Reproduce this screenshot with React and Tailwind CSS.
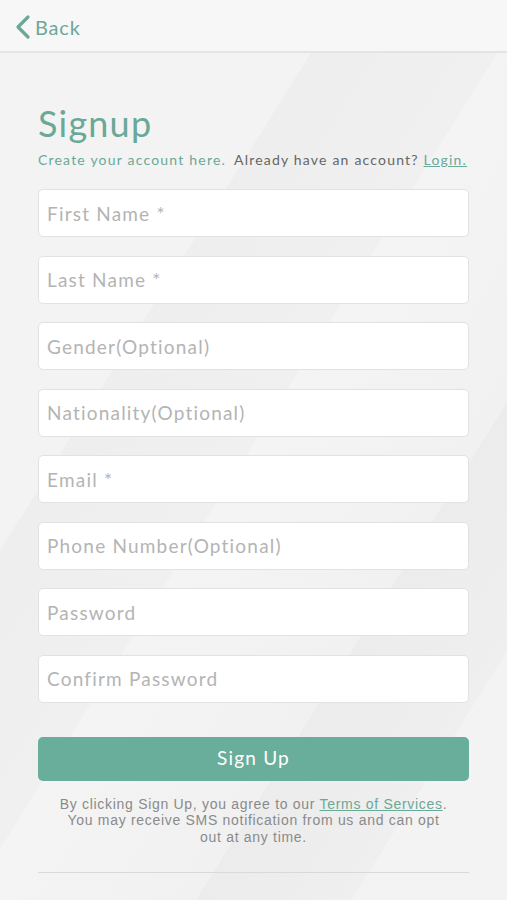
import React from "react";

const fields = [
  "First Name *",
  "Last Name *",
  "Gender(Optional)",
  "Nationality(Optional)",
  "Email *",
  "Phone Number(Optional)",
  "Password",
  "Confirm Password",
];

function BackIcon() {
  return (
    <svg width="18" height="26" viewBox="0 0 18 26" fill="none">
      <path d="M14 3 L4 13 L14 23" stroke="#6aa898" strokeWidth="3.2" strokeLinecap="round" strokeLinejoin="round" />
    </svg>
  );
}

export default function App() {
  return (
    <div className="w-[507px] h-[900px] overflow-hidden flex flex-col bg-[#f1f1f1]" style={{ fontFamily: "Lato, 'Noto Sans', sans-serif" }}>
      {/* header */}
      <div className="h-[53px] shrink-0 bg-[#f7f7f7] border-b-2 border-[#e4e4e4] flex items-center pl-[14px] pt-[3px]">
        <BackIcon />
        <span className="ml-[3px] text-[20px] text-[#6ea797] leading-none tracking-[0.8px]">Back</span>
      </div>

      {/* body */}
      <div className="flex-1 px-[38px] pt-[52px] bg-[linear-gradient(122deg,#f3f3f3_0%,#f3f3f3_30%,#eeeeee_30%,#f0f0f0_48%,#f4f4f4_48%,#f1f1f1_70%,#ececec_70%,#efefef_85%,#f3f3f3_85%)]">
        <h1 className="text-[36px] text-[#6aa898] leading-none tracking-[1.2px]">Signup</h1>
        <p className="mt-[12px] text-[14px] leading-none tracking-[1.2px] whitespace-nowrap">
          <span className="text-[#6aa898]">Create your account here.</span>
          <span className="ml-[8px] text-[#666]">Already have an account? </span>
          <span className="text-[#6aa898] underline">Login.</span>
        </p>

        <div className="mt-[22px] flex flex-col gap-[18.5px]">
          {fields.map((f) => (
            <input
              key={f}
              placeholder={f}
              type="text"
              className="h-[48px] w-full rounded-[5px] bg-white border border-[#e2e2e2] px-[8px] text-[19px] tracking-[1.2px] placeholder:text-[#b4b4b4] outline-none"
            />
          ))}
        </div>

        <button className="mt-[34px] w-full h-[44px] rounded-[5px] bg-[#68ae9a] text-white text-[19px] tracking-[1.2px]">
          Sign Up
        </button>

        <p className="mt-[15px] text-center text-[14px] leading-[16.5px] tracking-[0.7px] text-[#8a8a8a] px-[18px]" style={{ fontFamily: "'Liberation Sans', Arial, sans-serif" }}>
          By clicking Sign Up, you agree to our <span className="text-[#6aa898] underline">Terms of Services</span>.
          <br />
          You may receive SMS notification from us and can opt out at any time.
        </p>

        <div className="mt-[27px] h-px bg-[#d9d9d9]" />
      </div>
    </div>
  );
}
